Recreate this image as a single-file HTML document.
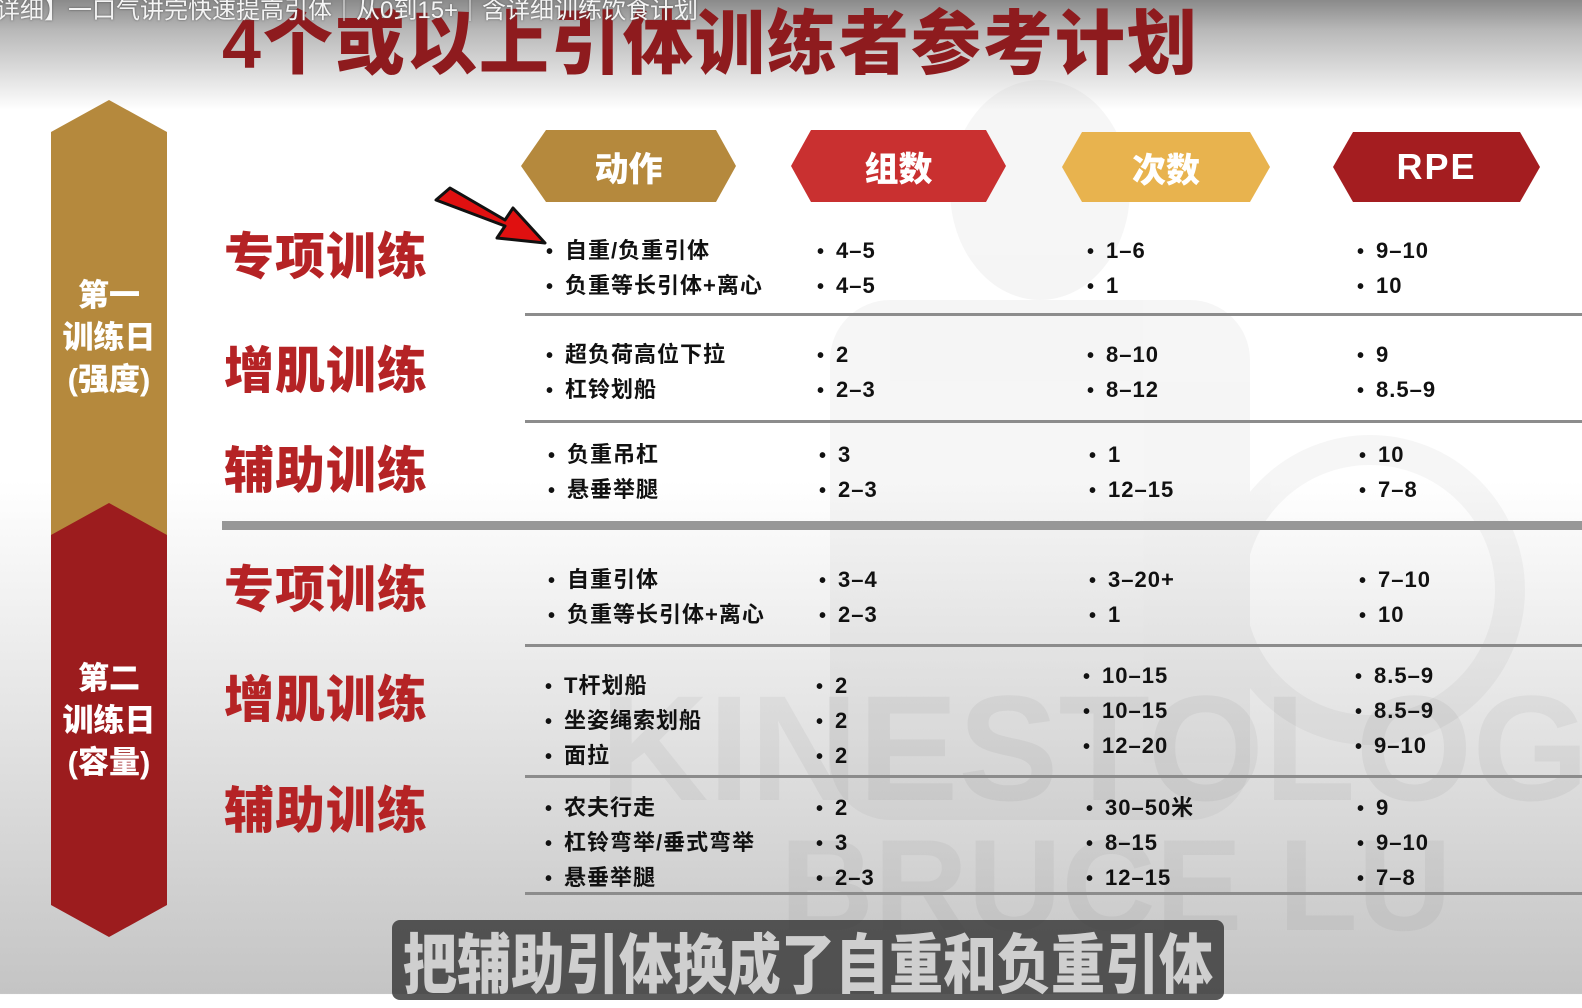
<!DOCTYPE html>
<html><head><meta charset="utf-8">
<style>
*{margin:0;padding:0;box-sizing:border-box}
body{width:1582px;height:994px;overflow:hidden;position:relative;font-family:"Liberation Sans","Noto Sans CJK SC",sans-serif;background:linear-gradient(#fff 0px,#fff 480px,#e6e6e6 700px,#c4c4c4 994px)}
.topbar{position:absolute;left:0;top:0;width:1582px;height:110px;background:linear-gradient(#8a8a8a 0,#b8b8b8 30px,rgba(255,255,255,0) 110px)}
.title{position:absolute;left:222px;top:2px;font-size:70px;font-weight:900;color:#8e1b1e;letter-spacing:2px;white-space:nowrap;line-height:84px}
.yt{position:absolute;left:-4px;top:-4px;font-size:24px;color:#f4f4f4;white-space:nowrap;line-height:30px;text-shadow:0 0 2px #555}
.cat{position:absolute;left:224px;font-size:50px;font-weight:900;color:#b52325;letter-spacing:1px;line-height:56px;white-space:nowrap;margin-top:3px}
.c{position:absolute;font-size:22px;font-weight:bold;color:#111;line-height:34px;white-space:nowrap;letter-spacing:1px;margin-top:3px}
.c b{display:inline-block;width:19px;font-size:20px}
.ln{position:absolute;height:3px;background:#8c8c8c;left:525px;width:1057px}
.hx{position:absolute;color:#fff;font-size:34px;font-weight:900;display:flex;align-items:center;justify-content:center}
.side{position:absolute;left:51px;width:116px;color:#fff;font-size:31px;font-weight:900;text-align:center;line-height:42px}
.sub{position:absolute;left:392px;top:920px;width:832px;height:80px;background:rgba(60,60,60,.85);border-radius:8px}
.subt{position:absolute;left:398px;top:924px;width:820px;color:#cfcfcf;font-size:54px;font-weight:900;line-height:70px;text-align:center;white-space:nowrap;transform:scaleY(1.2);transform-origin:top}
</style></head><body>
<svg style="position:absolute;left:0;top:0" width="1582" height="994">
<g fill="#000" opacity="0.035">
<ellipse cx="1040" cy="190" rx="90" ry="110"/>
<rect x="830" y="300" width="420" height="520" rx="60"/>
<circle cx="1370" cy="590" r="140" fill="none" stroke="#000" stroke-width="30"/>
</g>
<text x="600" y="800" font-family="Liberation Sans" font-weight="900" font-size="150" fill="#000" opacity="0.04">KINESTOLOGY PHD</text>
<text x="780" y="930" font-family="Liberation Sans" font-weight="900" font-size="130" fill="#000" opacity="0.035">BRUCE LU</text>
</svg>
<div class="topbar"></div>
<div class="title">4个或以上引体训练者参考计划</div>
<div class="yt">详细】一口气讲完快速提高引体｜从0到15+｜含详细训练饮食计划</div>

<svg style="position:absolute;left:0;top:0" width="200" height="994">
<polygon points="51,132 109,100 167,132 167,535 51,535" fill="#b5893d"/>
<polygon points="51,535 109,503 167,535 167,905 109,937 51,905" fill="#9c1c1e"/>
</svg>
<div class="side" style="top:275px">第一<br>训练日<br>(强度)</div>
<div class="side" style="top:658px">第二<br>训练日<br>(容量)</div>

<svg style="position:absolute;left:0;top:0" width="1582" height="260">
<polygon points="546,130 716,130 736,166 716,202 546,202 521,166" fill="#b5893d"/>
<polygon points="811,130 986,130 1006,166 986,202 811,202 791,166" fill="#c93030"/>
<polygon points="1082,132 1250,132 1270,167 1250,202 1082,202 1062,167" fill="#e8b34e"/>
<polygon points="1353,132 1520,132 1540,167 1520,202 1353,202 1333,167" fill="#a41d20"/>
<polygon points="436,200 450,188 505,220 513,208 545,243 497,238 505,226" fill="#e01010" stroke="#111" stroke-width="3" stroke-linejoin="round"/>
</svg>
<div class="hx" style="left:521px;top:130px;width:215px;height:72px">动作</div>
<div class="hx" style="left:791px;top:130px;width:215px;height:72px">组数</div>
<div class="hx" style="left:1062px;top:132px;width:208px;height:70px">次数</div>
<div class="hx" style="left:1333px;top:132px;width:207px;height:70px;font-size:36px;letter-spacing:2px">RPE</div>

<div class="cat" style="top:226px">专项训练</div>
<div class="cat" style="top:340px">增肌训练</div>
<div class="cat" style="top:440px">辅助训练</div>
<div class="cat" style="top:559px">专项训练</div>
<div class="cat" style="top:669px">增肌训练</div>
<div class="cat" style="top:780px">辅助训练</div>

<div class="ln" style="top:313px"></div>
<div class="ln" style="top:420px"></div>
<div style="position:absolute;left:222px;top:521px;width:1360px;height:9px;background:#979797"></div>
<div class="ln" style="top:644px"></div>
<div class="ln" style="top:775px"></div>
<div class="ln" style="top:892px"></div>

<div class="c" style="left:546px;top:231px"><b>•</b>自重/负重引体<br><b>•</b>负重等长引体+离心</div>
<div class="c" style="left:817px;top:231px"><b>•</b>4–5<br><b>•</b>4–5</div>
<div class="c" style="left:1087px;top:231px"><b>•</b>1–6<br><b>•</b>1</div>
<div class="c" style="left:1357px;top:231px"><b>•</b>9–10<br><b>•</b>10</div>

<div class="c" style="left:546px;top:335px"><b>•</b>超负荷高位下拉<br><b>•</b>杠铃划船</div>
<div class="c" style="left:817px;top:335px"><b>•</b>2<br><b>•</b>2–3</div>
<div class="c" style="left:1087px;top:335px"><b>•</b>8–10<br><b>•</b>8–12</div>
<div class="c" style="left:1357px;top:335px"><b>•</b>9<br><b>•</b>8.5–9</div>

<div class="c" style="left:548px;top:435px"><b>•</b>负重吊杠<br><b>•</b>悬垂举腿</div>
<div class="c" style="left:819px;top:435px"><b>•</b>3<br><b>•</b>2–3</div>
<div class="c" style="left:1089px;top:435px"><b>•</b>1<br><b>•</b>12–15</div>
<div class="c" style="left:1359px;top:435px"><b>•</b>10<br><b>•</b>7–8</div>

<div class="c" style="left:548px;top:560px"><b>•</b>自重引体<br><b>•</b>负重等长引体+离心</div>
<div class="c" style="left:819px;top:560px"><b>•</b>3–4<br><b>•</b>2–3</div>
<div class="c" style="left:1089px;top:560px"><b>•</b>3–20+<br><b>•</b>1</div>
<div class="c" style="left:1359px;top:560px"><b>•</b>7–10<br><b>•</b>10</div>

<div class="c" style="left:545px;top:666px"><b>•</b>T杆划船<br><b>•</b>坐姿绳索划船<br><b>•</b>面拉</div>
<div class="c" style="left:816px;top:666px"><b>•</b>2<br><b>•</b>2<br><b>•</b>2</div>
<div class="c" style="left:1083px;top:656px"><b>•</b>10–15<br><b>•</b>10–15<br><b>•</b>12–20</div>
<div class="c" style="left:1355px;top:656px"><b>•</b>8.5–9<br><b>•</b>8.5–9<br><b>•</b>9–10</div>

<div class="c" style="left:545px;top:788px"><b>•</b>农夫行走<br><b>•</b>杠铃弯举/垂式弯举<br><b>•</b>悬垂举腿</div>
<div class="c" style="left:816px;top:788px"><b>•</b>2<br><b>•</b>3<br><b>•</b>2–3</div>
<div class="c" style="left:1086px;top:788px"><b>•</b>30–50米<br><b>•</b>8–15<br><b>•</b>12–15</div>
<div class="c" style="left:1357px;top:788px"><b>•</b>9<br><b>•</b>9–10<br><b>•</b>7–8</div>

<div class="sub"></div>
<div class="subt">把辅助引体换成了自重和负重引体</div>
</body></html>
